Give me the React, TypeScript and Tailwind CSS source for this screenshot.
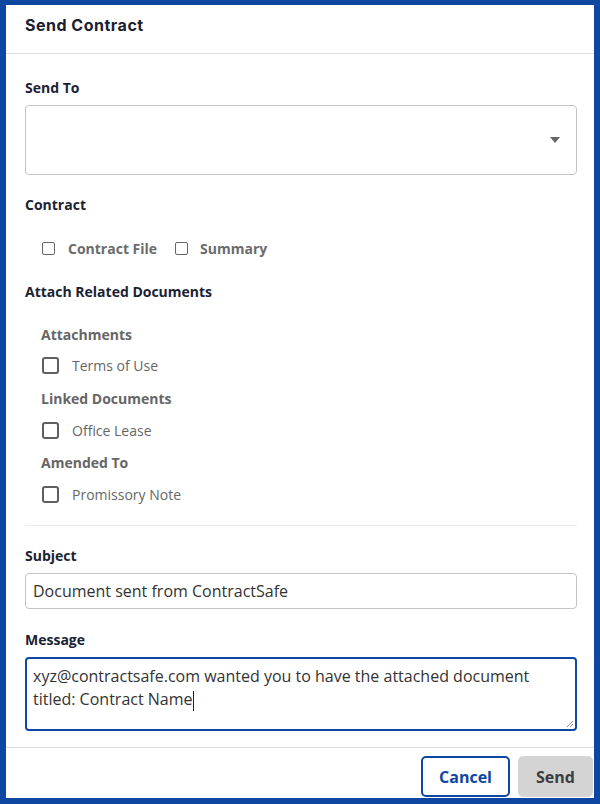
import React from "react";

function Box({ size = "lg" }: { size?: "sm" | "lg" }) {
  return size === "sm" ? (
    <span className="inline-block w-[13px] h-[13px] border-[1.5px] border-[#666] rounded-[2px] bg-white shrink-0" />
  ) : (
    <span className="inline-block w-[17px] h-[17px] border-2 border-[#5f5f5f] rounded-[3px] bg-white shrink-0" />
  );
}

function DocRow({ label }: { label: string }) {
  return (
    <div className="flex items-center h-[20px] gap-[13px] pl-[17px]">
      <Box />
      <span className="text-[14px] text-[#666]">{label}</span>
    </div>
  );
}

export default function App() {
  return (
    <div
      className="w-[600px] h-[804px] bg-white border-[#0d47a1] border-t-[5px] border-l-[6px] border-r-[6px] border-b-[6px] flex flex-col overflow-hidden"
      style={{ fontFamily: '"Open Sans", "Liberation Sans", sans-serif' }}
    >
      {/* Header */}
      <div className="h-[49px] border-b border-[#dcdcdc] pl-[19px] pt-[10px] shrink-0">
        <h2
          className="text-[16px] leading-[20px] font-bold tracking-[0.5px] text-[#1a2030]"
          style={{ fontFamily: 'Inter, "Open Sans", sans-serif' }}
        >
          Send Contract
        </h2>
      </div>

      {/* Body */}
      <div className="flex-1 pl-[19px] pr-[17px] flex flex-col">
        <label className="mt-[24px] text-[14px] leading-[20px] font-bold text-[#1b2333]">Send To</label>
        <div className="mt-[7px] h-[70px] border border-[#c4c4c4] rounded-[4px] flex items-center justify-end pr-[16px]">
          <svg width="10" height="6" viewBox="0 0 10 6">
            <path d="M0 0H10L5 6Z" fill="#666" />
          </svg>
        </div>

        <label className="mt-[20px] text-[14px] leading-[20px] font-bold text-[#1b2333]">Contract</label>
        <div className="mt-[23px] flex items-center h-[20px] pl-[17px]">
          <Box size="sm" />
          <span className="ml-[13px] text-[14px] font-bold text-[#6b6b6b]">Contract File</span>
          <span className="ml-[18px] flex">
            <Box size="sm" />
          </span>
          <span className="ml-[12px] text-[14px] font-bold text-[#6b6b6b]">Summary</span>
        </div>

        <label className="mt-[24px] text-[14px] leading-[20px] font-bold text-[#1b2333]">
          Attach Related Documents
        </label>

        <div className="mt-[23px] pl-[16px] text-[14px] leading-[20px] font-bold text-[#666]">Attachments</div>
        <div className="mt-[10px]">
          <DocRow label="Terms of Use" />
        </div>
        <div className="mt-[14px] pl-[16px] text-[14px] leading-[20px] font-bold text-[#666]">Linked Documents</div>
        <div className="mt-[11px]">
          <DocRow label="Office Lease" />
        </div>
        <div className="mt-[13px] pl-[16px] text-[14px] leading-[20px] font-bold text-[#666]">Amended To</div>
        <div className="mt-[11px]">
          <DocRow label="Promissory Note" />
        </div>

        <div className="mt-[21px] border-t border-[#ececec]" />

        <label className="mt-[20px] text-[14px] leading-[20px] font-bold text-[#1b2333]">Subject</label>
        <div className="mt-[7px] h-[36px] border border-[#c4c4c4] rounded-[4px] flex items-center px-[7px] text-[16px] text-[#333]">
          Document sent from ContractSafe
        </div>

        <label className="mt-[21px] text-[14px] leading-[20px] font-bold text-[#1b2333]">Message</label>
        <div className="mt-[7px] h-[74px] border-2 border-[#0d47a1] rounded-[4px] px-[6px] pt-[6px] text-[16px] leading-[23px] text-[#333] relative">
          xyz@contractsafe.com wanted you to have the attached document titled: Contract Name
          <span className="inline-block w-px h-[20px] bg-[#222] align-middle" />
          <svg className="absolute right-[1px] bottom-[1px]" width="9" height="9" viewBox="0 0 9 9">
            <path d="M8 2L2 8M8 5L5 8" stroke="#888" strokeWidth="1" />
          </svg>
        </div>
      </div>

      {/* Footer */}
      <div className="border-t border-[#dcdcdc] h-[51px] shrink-0 flex items-start justify-end gap-[8px] pt-[8px] pr-[1px]">
        <button className="w-[89px] h-[41px] border-2 border-[#0d47a1] rounded-[5px] text-[16px] font-bold text-[#0d47a1] bg-white">
          Cancel
        </button>
        <button className="w-[75px] h-[41px] rounded-[5px] bg-[#d4d4d4] text-[16px] font-bold text-[#3d3d3d]">
          Send
        </button>
      </div>
    </div>
  );
}
